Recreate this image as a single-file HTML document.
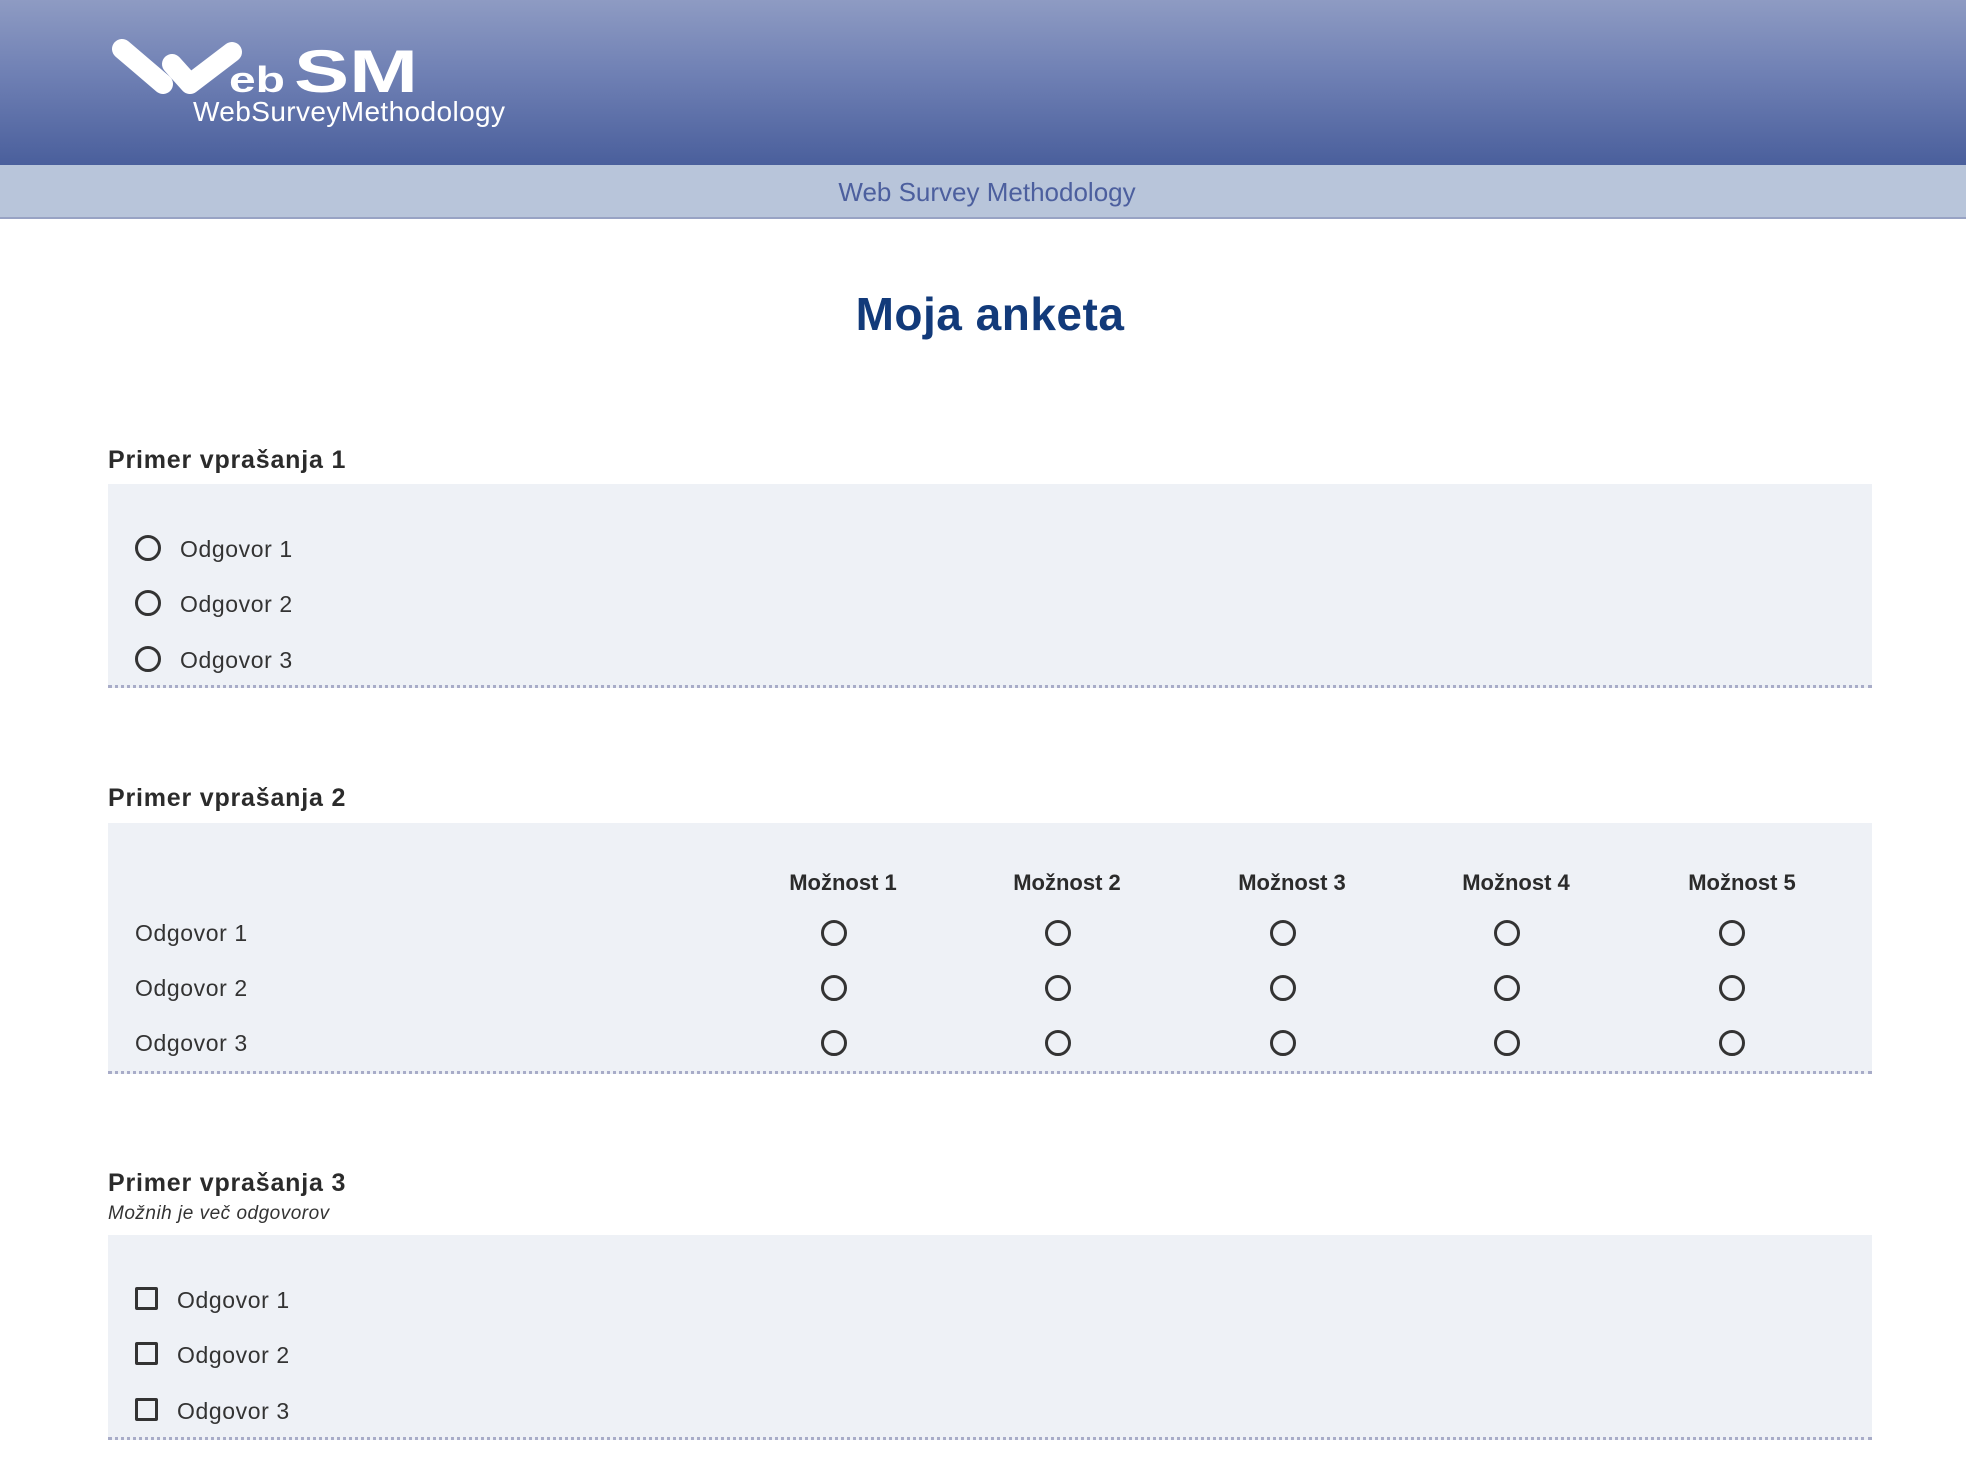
<!DOCTYPE html>
<html><head><meta charset="utf-8"><style>
*{margin:0;padding:0;box-sizing:border-box}
body{width:1966px;height:1474px;background:#fff;font-family:"Liberation Sans",sans-serif;color:#333;position:relative;overflow:hidden}
.hdr{position:absolute;left:0;top:0;width:1966px;height:165px;background:linear-gradient(#8e9bc3,#6f80b4 45%,#4a5f9c)}
.nav{position:absolute;left:0;top:165px;width:1966px;height:54px;background:#b8c5da;border-bottom:2px solid #98a3c4;text-align:center;font-size:26px;color:#4c5f9e;line-height:54px;padding-left:8px}
.t{position:absolute;white-space:nowrap}
h1{position:absolute;left:0;width:1980px;top:287px;text-align:center;font-size:46px;color:#123a7a;font-weight:bold;letter-spacing:0.5px}
.q{position:absolute;left:108px;font-size:25px;font-weight:bold;color:#2b2b2b;letter-spacing:0.8px}
.box{position:absolute;left:108px;width:1764px;background:#eef1f6;border-bottom:3px dotted #a8acc8}
.r{position:absolute;width:26px;height:26px;border:3px solid #333;border-radius:50%}
.c{position:absolute;width:23px;height:23px;border:3px solid #333;border-radius:2px}
.lbl{position:absolute;font-size:23px;color:#333;white-space:nowrap;letter-spacing:0.6px}
.col{position:absolute;font-size:22px;font-weight:bold;color:#2b2b2b;white-space:nowrap;transform:translateX(-50%)}
</style></head><body>
<div class="hdr">
<svg width="520" height="140" style="position:absolute;left:0;top:0">
<g stroke="#fff" stroke-linecap="round" stroke-linejoin="round" fill="none" stroke-width="20">
<line x1="122" y1="49" x2="163" y2="84"/>
<polyline points="172,64 190,84 232,52"/>
</g>
<text x="229" y="92" fill="#fff" font-family="Liberation Sans" font-size="36" font-weight="bold" textLength="56" lengthAdjust="spacingAndGlyphs">eb</text>
<text x="294" y="92" fill="#fff" font-family="Liberation Sans" font-size="60" font-weight="bold" textLength="124" lengthAdjust="spacingAndGlyphs">SM</text>
<text x="193" y="121" fill="#fff" font-family="Liberation Sans" font-size="28" textLength="312">WebSurveyMethodology</text>
</svg>
</div>
<div class="nav">Web Survey Methodology</div>
<h1>Moja anketa</h1>

<div class="q" style="top:446px">Primer vprašanja 1</div>
<div class="box" style="top:484px;height:204px"></div>
<div class="r" style="left:135px;top:535px"></div><div class="lbl" style="left:180px;top:536px">Odgovor 1</div>
<div class="r" style="left:135px;top:590px"></div><div class="lbl" style="left:180px;top:591px">Odgovor 2</div>
<div class="r" style="left:135px;top:646px"></div><div class="lbl" style="left:180px;top:647px">Odgovor 3</div>

<div class="q" style="top:784px">Primer vprašanja 2</div>
<div class="box" style="top:823px;height:251px"></div>
<div class="col" style="left:843px;top:870px">Možnost 1</div>
<div class="col" style="left:1067px;top:870px">Možnost 2</div>
<div class="col" style="left:1292px;top:870px">Možnost 3</div>
<div class="col" style="left:1516px;top:870px">Možnost 4</div>
<div class="col" style="left:1742px;top:870px">Možnost 5</div>
<div class="lbl" style="left:135px;top:920px">Odgovor 1</div>
<div class="lbl" style="left:135px;top:975px">Odgovor 2</div>
<div class="lbl" style="left:135px;top:1030px">Odgovor 3</div>
<div class="r" style="left:821px;top:920px"></div><div class="r" style="left:1045px;top:920px"></div><div class="r" style="left:1270px;top:920px"></div><div class="r" style="left:1494px;top:920px"></div><div class="r" style="left:1719px;top:920px"></div>
<div class="r" style="left:821px;top:975px"></div><div class="r" style="left:1045px;top:975px"></div><div class="r" style="left:1270px;top:975px"></div><div class="r" style="left:1494px;top:975px"></div><div class="r" style="left:1719px;top:975px"></div>
<div class="r" style="left:821px;top:1030px"></div><div class="r" style="left:1045px;top:1030px"></div><div class="r" style="left:1270px;top:1030px"></div><div class="r" style="left:1494px;top:1030px"></div><div class="r" style="left:1719px;top:1030px"></div>

<div class="q" style="top:1169px">Primer vprašanja 3</div>
<div class="t" style="left:108px;top:1203px;font-size:19px;font-style:italic;color:#333;letter-spacing:0.5px">Možnih je več odgovorov</div>
<div class="box" style="top:1235px;height:205px"></div>
<div class="c" style="left:135px;top:1287px"></div><div class="lbl" style="left:177px;top:1287px">Odgovor 1</div>
<div class="c" style="left:135px;top:1342px"></div><div class="lbl" style="left:177px;top:1342px">Odgovor 2</div>
<div class="c" style="left:135px;top:1398px"></div><div class="lbl" style="left:177px;top:1398px">Odgovor 3</div>
</body></html>
